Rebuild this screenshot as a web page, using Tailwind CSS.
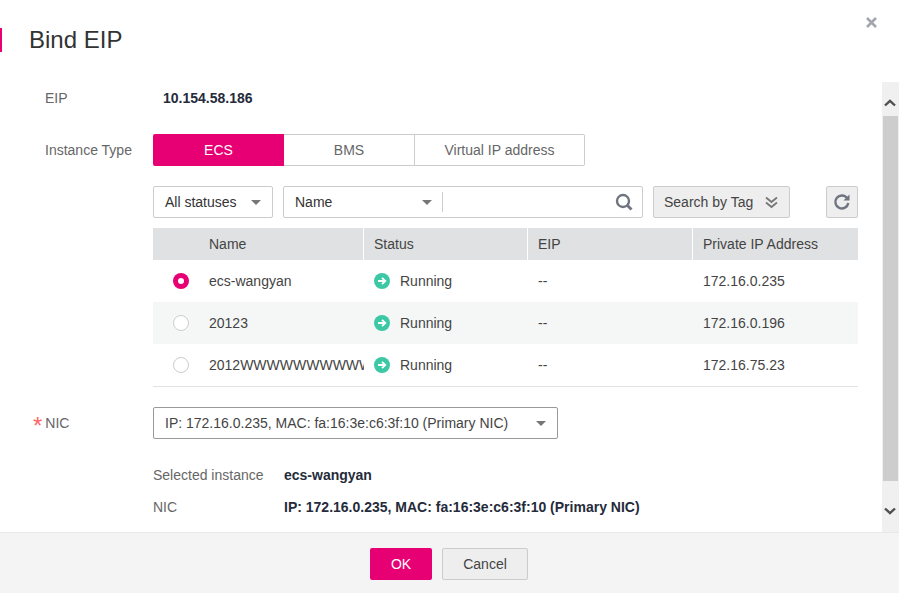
<!doctype html>
<html>
<head>
<meta charset="utf-8">
<script src="https://cdn.jsdelivr.net/npm/@tailwindcss/browser@4"></script>
</head>
<body class="bg-white">
<div class="relative flex h-[593px] w-[899px] flex-col overflow-hidden bg-white font-['Liberation_Sans',Arial,sans-serif] text-[14px] text-[#252b3a]">
  <!-- header -->
  <header class="relative h-[82px] shrink-0 pt-[28px]">
    <div class="flex h-[24px] items-center">
      <span class="h-[24px] w-[2px] bg-[#e60073]"></span>
      <h1 class="ml-[27px] text-[24px] leading-[24px] font-normal text-[#333]">Bind EIP</h1>
    </div>
    <svg class="absolute top-[17px] left-[866px]" width="11" height="11" viewBox="0 0 11 11"><path d="M1 1 L10 10 M10 1 L1 10" stroke="#a3a6ad" stroke-width="2.6" fill="none"/></svg>
  </header>

  <!-- body -->
  <main class="flex h-[450px] shrink-0">
    <div class="w-[882px] shrink-0">
      <div class="flex h-[32px] items-center">
        <span class="w-[163px] shrink-0 pl-[45px] text-[#666]">EIP</span>
        <span class="font-bold">10.154.58.186</span>
      </div>

      <div class="mt-[20px] flex h-[32px] items-center">
        <span class="w-[153px] shrink-0 pl-[45px] text-[#666]">Instance Type</span>
        <div class="flex h-[32px]">
          <button class="h-[32px] w-[131px] rounded-l-[2px] bg-[#e60073] text-white">ECS</button>
          <button class="h-[32px] w-[131px] border-y border-r border-[#ccc] text-[#666]">BMS</button>
          <button class="h-[32px] w-[170px] rounded-r-[2px] border-y border-r border-[#ccc] text-[#666]">Virtual IP address</button>
        </div>
      </div>

      <div class="mt-[20px] ml-[153px] flex h-[32px] w-[705px]">
        <div class="flex h-[32px] w-[120px] items-center justify-between rounded-[2px] border border-[#ccc] pr-[11px] pl-[11px] text-[#333]">
          <span>All statuses</span>
          <svg width="10" height="5" viewBox="0 0 10 5"><path d="M0 0H10L5 5Z" fill="#777"/></svg>
        </div>
        <div class="ml-[10px] flex h-[32px] w-[360px] items-center rounded-[2px] border border-[#ccc] text-[#333]">
          <span class="w-[138px] shrink-0 pl-[11px]">Name</span>
          <svg class="shrink-0" width="10" height="5" viewBox="0 0 10 5"><path d="M0 0H10L5 5Z" fill="#777"/></svg>
          <span class="ml-[10px] h-[20px] w-px shrink-0 bg-[#ccc]"></span>
          <svg class="mr-[9px] ml-auto" width="18" height="18" viewBox="0 0 18 18"><circle cx="8" cy="8" r="6" fill="none" stroke="#6f7480" stroke-width="2.4"/><path d="M12.4 12.4 L16.5 16.5" stroke="#6f7480" stroke-width="2.8"/></svg>
        </div>
        <div class="ml-[10px] flex h-[32px] w-[137px] items-center rounded-[2px] border border-[#ccc] bg-[#eee] pl-[10px] text-[#444]">
          <span>Search by Tag</span>
          <svg class="ml-[12px]" width="13" height="13" viewBox="0 0 13 13"><path d="M1 1.5 L6.5 6 L12 1.5 M1 6.5 L6.5 11 L12 6.5" fill="none" stroke="#777" stroke-width="1.8"/></svg>
        </div>
        <div class="ml-[36px] flex h-[32px] w-[32px] items-center justify-center rounded-[2px] border border-[#ccc] bg-[#eee]">
          <svg width="18" height="18" viewBox="0 0 18 18"><path d="M14.2 5.2 A6.5 6.5 0 1 0 15.3 10" fill="none" stroke="#6f7480" stroke-width="2.4"/><path d="M16.5 1.5 V7.5 H10.5 Z" fill="#6f7480"/></svg>
        </div>
      </div>

      <table class="mt-[10px] ml-[153px] w-[705px] table-fixed border-separate border-spacing-0 text-left">
        <colgroup><col class="w-[211px]"><col class="w-[164px]"><col class="w-[165px]"><col class="w-[165px]"></colgroup>
        <thead>
          <tr class="h-[32px] bg-[#dfe1e2] text-[#444]">
            <th class="border-r border-white pl-[56px] font-normal">Name</th>
            <th class="border-r border-white pl-[10px] font-normal">Status</th>
            <th class="border-r border-white pl-[10px] font-normal">EIP</th>
            <th class="pl-[10px] font-normal">Private IP Address</th>
          </tr>
        </thead>
        <tbody class="text-[#444]">
          <tr class="h-[42px]">
            <td class="relative pl-[56px]"><span class="absolute top-[13px] left-[20px] flex h-[16px] w-[16px] items-center justify-center rounded-full bg-[#e60073]"><span class="h-[6px] w-[6px] rounded-full bg-white"></span></span>ecs-wangyan</td>
            <td class="pl-[10px]"><div class="flex items-center gap-[10px]"><svg width="16" height="16" viewBox="0 0 16 16"><circle cx="8" cy="8" r="8" fill="#3cc8a5"/><path d="M4 8H11M8 4.8 L11.3 8 L8 11.2" fill="none" stroke="#fff" stroke-width="1.8"/></svg>Running</div></td>
            <td class="pl-[10px]">--</td>
            <td class="pl-[10px]">172.16.0.235</td>
          </tr>
          <tr class="h-[42px] bg-[#f5f7f7]">
            <td class="relative pl-[56px]"><span class="absolute top-[13px] left-[20px] h-[16px] w-[16px] rounded-full border border-[#ccc] bg-white"></span>20123</td>
            <td class="pl-[10px]"><div class="flex items-center gap-[10px]"><svg width="16" height="16" viewBox="0 0 16 16"><circle cx="8" cy="8" r="8" fill="#3cc8a5"/><path d="M4 8H11M8 4.8 L11.3 8 L8 11.2" fill="none" stroke="#fff" stroke-width="1.8"/></svg>Running</div></td>
            <td class="pl-[10px]">--</td>
            <td class="pl-[10px]">172.16.0.196</td>
          </tr>
          <tr class="h-[43px]">
            <td class="relative border-b border-[#e0e1e3] pl-[56px]"><span class="absolute top-[13px] left-[20px] h-[16px] w-[16px] rounded-full border border-[#ccc] bg-white"></span><div class="w-[155px] overflow-hidden whitespace-nowrap">2012WWWWWWWWWWWWW</div></td>
            <td class="border-b border-[#e0e1e3] pl-[10px]"><div class="flex items-center gap-[10px]"><svg width="16" height="16" viewBox="0 0 16 16"><circle cx="8" cy="8" r="8" fill="#3cc8a5"/><path d="M4 8H11M8 4.8 L11.3 8 L8 11.2" fill="none" stroke="#fff" stroke-width="1.8"/></svg>Running</div></td>
            <td class="border-b border-[#e0e1e3] pl-[10px]">--</td>
            <td class="border-b border-[#e0e1e3] pl-[10px]">172.16.75.23</td>
          </tr>
        </tbody>
      </table>

      <div class="mt-[20px] flex h-[32px] items-center">
        <span class="flex w-[153px] shrink-0 items-center pt-px pl-[33px] text-[#666]"><span class="mt-[5px] mr-[3px] text-[24px] leading-[14px] text-[#f66]">*</span>NIC</span>
        <div class="flex h-[32px] w-[405px] items-center justify-between rounded-[2px] border border-[#999] pr-[11px] pl-[11px] text-[#444]">
          <span class="pt-px">IP: 172.16.0.235, MAC: fa:16:3e:c6:3f:10 (Primary NIC)</span>
          <svg width="10" height="5" viewBox="0 0 10 5"><path d="M0 0H10L5 5Z" fill="#777"/></svg>
        </div>
      </div>

      <div class="mt-[20px] ml-[153px] flex h-[32px] items-center">
        <span class="w-[131px] shrink-0 text-[#666]">Selected instance</span>
        <span class="font-bold">ecs-wangyan</span>
      </div>
      <div class="ml-[153px] flex h-[32px] items-center">
        <span class="w-[131px] shrink-0 text-[#666]">NIC</span>
        <span class="font-bold">IP: 172.16.0.235, MAC: fa:16:3e:c6:3f:10 (Primary NIC)</span>
      </div>
    </div>

    <!-- scrollbar -->
    <div class="flex w-[17px] shrink-0 flex-col bg-[#f0f0f0]">
      <div class="flex h-[34px] items-center justify-center pt-[8px] pr-px">
        <svg width="12" height="8" viewBox="0 0 12 8"><path d="M1 6.5 L6 1.8 L11 6.5" fill="none" stroke="#505050" stroke-width="2.4"/></svg>
      </div>
      <div class="ml-px h-[365px] w-[15px] bg-[#cdcdcd]"></div>
      <div class="flex flex-1 items-center justify-center pt-[8px] pr-px">
        <svg width="12" height="8" viewBox="0 0 12 8"><path d="M1 1.5 L6 6.2 L11 1.5" fill="none" stroke="#505050" stroke-width="2.4"/></svg>
      </div>
    </div>
  </main>

  <!-- footer -->
  <footer class="flex h-[61px] shrink-0 justify-center gap-[10px] border-t border-[#e8e8e8] bg-[#f4f4f4] pt-[15px] pr-px">
    <button class="h-[32px] w-[62px] rounded-[2px] bg-[#e60073] text-white">OK</button>
    <button class="h-[32px] w-[86px] rounded-[2px] border border-[#ccc] bg-[#eee] text-[#444]">Cancel</button>
  </footer>
</div>
</body>
</html>
